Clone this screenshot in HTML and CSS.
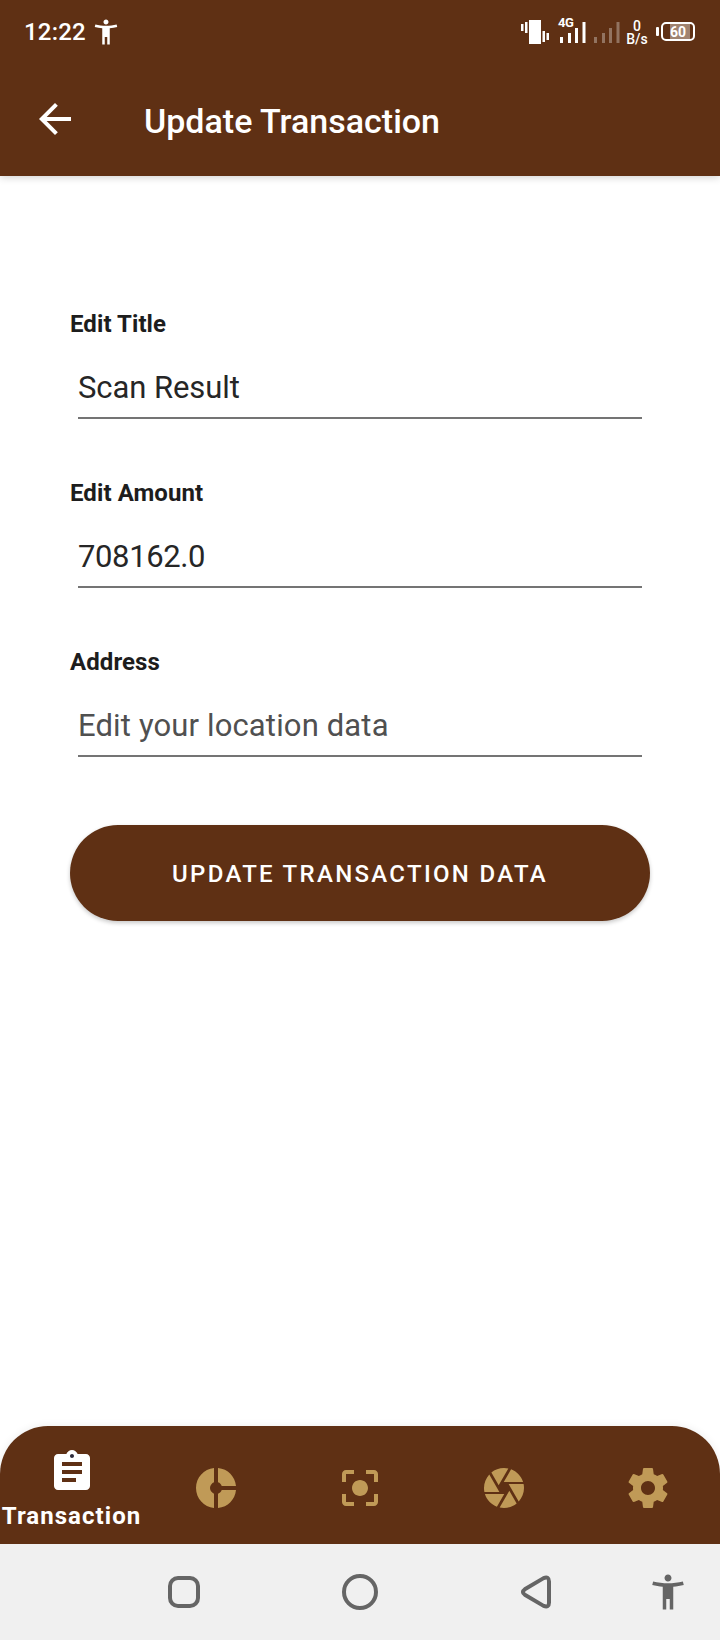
FILE: index.html
```html
<!DOCTYPE html>
<html lang="en">
<head>
<meta charset="utf-8">
<title>Update Transaction</title>
<link rel="stylesheet" href="styles.css">
</head>
<body>
<div class="screen">
  <header class="top">
    <div class="status">
      <span class="clock">12:22</span>
      <svg class="status-person" viewBox="0 0 24 24"><path d="M20.5 6c-2.61.7-5.67 1-8.5 1s-5.89-.3-8.5-1L3 8c1.86.5 4 .83 6 1v13h2v-6h2v6h2V9c2-.17 4.14-.5 6-1l-.5-2zM12 6c1.1 0 2-.9 2-2s-.9-2-2-2-2 .9-2 2 .9 2 2 2z"/></svg>
      <svg class="vibrate" viewBox="0 0 28 24"><path d="M8 0h12v24H8zM0 4h2.5v7H0zM4 2h2.5v11H4zM21.5 11H24v11h-2.500zM25.500 13H28v7h-2.500z"/></svg>
      <div class="signal">
        <span class="signal-type">4G</span>
        <svg viewBox="0 0 26 21"><path d="M0 15h3v6H0zM8 11h3v10H8zM15 6h3v15h-3zM22.500 0h3v21h-3z"/></svg>
      </div>
      <svg class="signal-off" viewBox="0 0 26 21"><path d="M0 15h3v6H0zM8 11h3v10H8zM15 6h3v15h-3zM22.500 0h3v21h-3z"/></svg>
      <div class="speed"><span>0</span><span>B/s</span></div>
      <div class="battery"><span class="battery-tip"></span><span class="battery-body">60</span></div>
    </div>
    <div class="toolbar">
      <svg class="back" viewBox="0 0 24 24"><path d="M20 11H7.830l5.590-5.590L12 4l-8 8 8 8 1.410-1.410L7.830 13H20v-2z"/></svg>
      <h1 class="title">Update Transaction</h1>
    </div>
  </header>
  <main class="form">
    <div class="field"><label class="label">Edit Title</label><div class="input">Scan Result</div></div>
    <div class="field"><label class="label">Edit Amount</label><div class="input amount">708162.0</div></div>
    <div class="field"><label class="label">Address</label><div class="input hint">Edit your location data</div></div>
    <button class="submit">UPDATE TRANSACTION DATA</button>
  </main>
  <nav class="tabs">
    <div class="tab active">
      <svg viewBox="0 0 24 24"><circle cx="12" cy="4" r="1.500" class="clip-hole"/><path d="M19 3h-4.180C14.400 1.840 13.300 1 12 1c-1.300 0-2.400.84-2.820 2H5c-1.100 0-2 .9-2 2v14c0 1.100.9 2 2 2h14c1.100 0 2-.9 2-2V5c0-1.100-.9-2-2-2zm-7 0c.55 0 1 .45 1 1s-.45 1-1 1-1-.45-1-1 .45-1 1-1zm2 14H7v-2h7v2zm3-4H7v-2h10v2zm0-4H7V7h10v2z"/></svg>
      <span class="tab-label">Transaction</span>
    </div>
    <div class="tab"><svg viewBox="0 0 24 24"><path d="M11 9.160V2c-5 .5-9 4.790-9 10s4 9.500 9 10v-7.160c-1-.41-2-1.520-2-2.840s1-2.430 2-2.840zM14.860 11H22c-.48-4.750-4-8.530-9-9v7.160c1 .3 1.520.98 1.860 1.840zM13 14.840V22c5-.47 8.520-4.250 9-9h-7.140c-.34.86-.86 1.540-1.860 1.840z"/></svg></div>
    <div class="tab"><svg viewBox="0 0 24 24"><path d="M12 8c-2.210 0-4 1.790-4 4s1.790 4 4 4 4-1.790 4-4-1.790-4-4-4zm-7 7H3v4c0 1.100.9 2 2 2h4v-2H5v-4zM5 5h4V3H5c-1.100 0-2 .9-2 2v4h2V5zm14-2h-4v2h4v4h2V5c0-1.100-.9-2-2-2zm0 16h-4v2h4c1.100 0 2-.9 2-2v-4h-2v4z"/></svg></div>
    <div class="tab"><svg viewBox="0 0 24 24"><path d="M9.400 10.500l4.770-8.260C13.470 2.090 12.750 2 12 2c-2.400 0-4.600.85-6.320 2.250l3.660 6.350.06-.1zM21.540 9c-.92-2.920-3.150-5.260-6-6.340L11.880 9h9.660zm.26 1h-7.490l.29.5 4.760 8.250C21 16.970 22 14.610 22 12c0-.69-.07-1.350-.2-2zM8.540 12l-3.900-6.750C3.010 7.030 2 9.390 2 12c0 .69.07 1.350.2 2h7.490l-1.150-2zm-6.080 3c.92 2.920 3.150 5.260 6 6.340L12.120 15H2.460zm11.270 0l-3.900 6.760c.7.15 1.420.24 2.170.24 2.400 0 4.600-.85 6.320-2.250l-3.660-6.350-.93 1.600z"/></svg></div>
    <div class="tab"><svg viewBox="0 0 24 24"><path d="M19.430 12.980c.04-.32.07-.64.07-.98s-.03-.66-.07-.98l2.110-1.650c.19-.15.24-.42.12-.64l-2-3.460c-.12-.22-.39-.3-.61-.22l-2.490 1c-.52-.4-1.080-.73-1.690-.98l-.38-2.650C14.460 2.180 14.250 2 14 2h-4c-.25 0-.46.18-.49.42l-.38 2.650c-.61.25-1.170.59-1.690.98l-2.490-1c-.23-.09-.49 0-.61.22l-2 3.460c-.13.22-.07.49.12.64l2.110 1.650c-.04.32-.07.65-.07.98s.03.66.07.98l-2.110 1.650c-.19.15-.24.42-.12.64l2 3.460c.12.22.39.3.61.22l2.490-1c.52.4 1.080.73 1.690.98l.38 2.650c.03.24.24.42.49.42h4c.25 0 .46-.18.49-.42l.38-2.650c.61-.25 1.170-.59 1.690-.98l2.490 1c.23.09.49 0 .61-.22l2-3.460c.12-.22.07-.49-.12-.64l-2.110-1.650zM12 15.500c-1.930 0-3.500-1.570-3.500-3.500s1.570-3.500 3.500-3.500 3.500 1.570 3.500 3.500-1.570 3.500-3.500 3.500z"/></svg></div>
  </nav>
  <footer class="system">
    <span class="recents"></span>
    <span class="home"></span>
    <svg class="nav-back" viewBox="0 0 32 36"><path d="M4.800 15.300 23.600 4.100Q29 2 29 7.500V28.500Q29 34 23.600 31.900L4.800 20.700Q1 18 4.800 15.300z"/></svg>
    <svg class="nav-person" viewBox="0 0 24 24"><path d="M20.500 6c-2.610.7-5.670 1-8.500 1s-5.890-.3-8.500-1L3 8c1.860.5 4 .83 6 1v13h2v-6h2v6h2V9c2-.17 4.140-.5 6-1l-.5-2zM12 6c1.100 0 2-.9 2-2s-.9-2-2-2-2 .9-2 2 .9 2 2 2z"/></svg>
  </footer>
</div>
</body>
</html>
```
FILE: styles.css
```css
* { box-sizing: border-box; }
body { margin: 0; font-family: Roboto, sans-serif; background: #fff; }
svg { display: block; flex: none; fill: currentColor; }
.screen { display: flex; flex-direction: column; width: 720px; height: 1640px; overflow: hidden; background: #fff; }
.top { height: 176px; background: #5f3014; color: #fff; box-shadow: 0 1px 8px rgba(0,0,0,.2); }
.status { display: flex; align-items: flex-start; height: 64px; padding: 0 24px; }
.clock { width: 67px; padding-top: 18px; font-size: 24px; line-height: 29px; font-weight: 500; letter-spacing: .2px; white-space: nowrap; }
.status-person { width: 30px; height: 30px; margin-top: 17px; }
.vibrate { width: 28px; height: 24px; margin: 20px 0 0 400px; }
.signal { width: 29px; margin-left: 9px; padding-top: 16px; }
.signal-type { display: block; height: 6px; font-size: 13px; line-height: 13px; font-weight: 700; letter-spacing: -.5px; }
.signal svg { width: 26px; height: 21px; margin-left: 2px; }
.signal-off { width: 26px; height: 21px; margin: 22px 0 0 7px; opacity: .32; }
.speed { display: flex; flex-direction: column; align-items: center; width: 24px; margin: 20px 0 0 5px; font-size: 14px; line-height: 13px; font-weight: 500; }
.battery { display: flex; align-items: center; gap: 2px; margin: 22px 0 0 7px; }
.battery-tip { width: 3px; height: 9px; border-radius: 1px; background: #fff; }
.battery-body { width: 34px; height: 19px; border: 2px solid #fff; border-radius: 5px; background: linear-gradient(90deg, #5f3014 22%, #a08370 22% 90%, #5f3014 90%); font-size: 14px; line-height: 16px; font-weight: 700; text-align: center; }
.toolbar { display: flex; padding-left: 31px; }
.back { width: 48px; height: 48px; margin-top: 31px; }
.title { margin: 37px 0 0 65px; font-size: 34px; line-height: 40px; font-weight: 500; white-space: nowrap; }
.form { flex: 1; padding: 134px 70px 0; color: #1d1d1d; }
.field { height: 169px; }
.label { display: block; font-size: 24px; line-height: 28px; font-weight: 700; letter-spacing: .08px; }
.input { height: 81px; margin: 0 8px; padding-top: 31px; border-bottom: 2px solid #747474; color: #262626; font-size: 31px; line-height: 38px; letter-spacing: -.08px; white-space: nowrap; }
.amount { letter-spacing: -.38px; }
.hint { color: #505050; letter-spacing: .14px; }
.submit { display: block; width: 580px; height: 96px; margin-top: 8px; padding: 2px 0 0; border: 0; border-radius: 48px; background: #5f3014; color: #fff; box-shadow: 0 2px 4px rgba(0,0,0,.22); font: 500 24px/28px Roboto, sans-serif; letter-spacing: 2.300px; }
.tabs { display: grid; grid-template-columns: repeat(5, 144px); height: 118px; border-radius: 48px 48px 0 0; background: #5f3014; color: #c09a57; box-shadow: 0 0 8px rgba(0,0,0,.08); }
.tab { display: flex; flex-direction: column; align-items: center; padding-top: 38px; }
.tab svg { width: 48px; height: 48px; }
.active { padding-top: 22px; color: #fff; }
.clip-hole { fill: #2c2b3c; }
.tab-label { margin: 6px 0 0 -1px; font-size: 24px; line-height: 28px; font-weight: 700; letter-spacing: 1.050px; }
.system { display: flex; align-items: center; height: 96px; padding-left: 168px; background: #f0f0f0; color: #656565; }
.recents { width: 32px; height: 32px; border: 4px solid; border-radius: 10px; }
.home { width: 36px; height: 36px; margin-left: 142px; border: 4px solid; border-radius: 50%; }
.nav-back { width: 32px; height: 36px; margin-left: 142px; fill: none; stroke: currentColor; stroke-width: 4; stroke-linejoin: round; }
.nav-person { width: 42px; height: 42px; margin-left: 95px; }
```
